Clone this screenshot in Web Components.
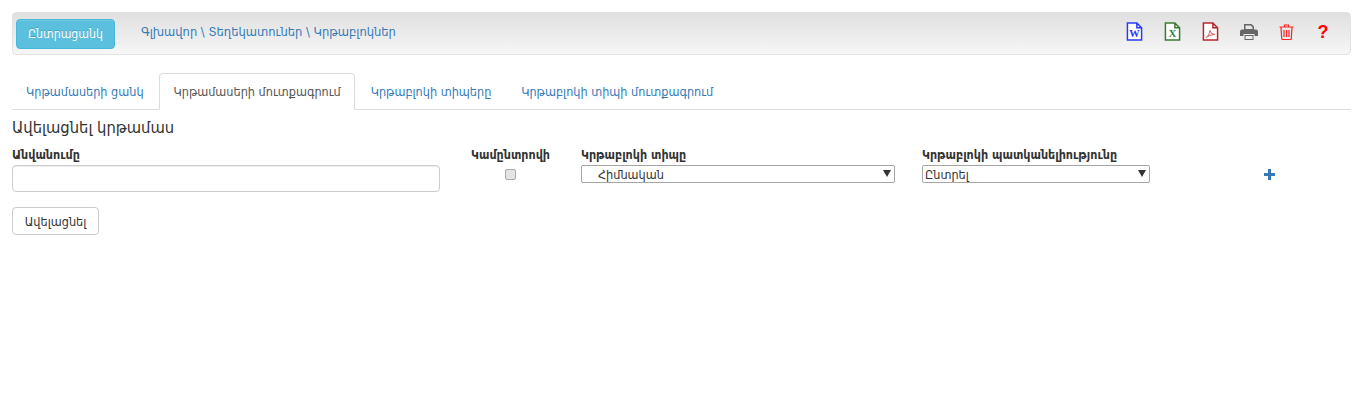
<!DOCTYPE html>
<html lang="hy">
<head>
<meta charset="utf-8">
<title>Կրթաբլոկներ</title>
<style>
  html, body { margin: 0; background: #fff; }
  body {
    font-family: "DejaVu Sans Condensed", "DejaVu Sans", sans-serif;
    font-size: 12.55px;
    color: #333;
  }
</style>
</head>
<body>
<x-page>
  <x-topbar slot="top" menu="Ընտրացանկ">
    <x-crumbs>
      <a>Գլխավոր</a> \ <a>Տեղեկատուներ</a> \ <a>Կրթաբլոկներ</a>
    </x-crumbs>
    <x-toolbar slot="tools"></x-toolbar>
  </x-topbar>
  <x-tabs>
    <x-tab>Կրթամասերի ցանկ</x-tab>
    <x-tab active>Կրթամասերի մուտքագրում</x-tab>
    <x-tab>Կրթաբլոկի տիպերը</x-tab>
    <x-tab>Կրթաբլոկի տիպի մուտքագրում</x-tab>
  </x-tabs>
  <x-block-form></x-block-form>
</x-page>

<script>
const ICONS = {
  word: `<svg width="17" height="19" viewBox="0 0 18 20"><path d="M1.500 1h10l5 5v13h-15z M11.500 1v5h5" fill="#fff" stroke="#2a3bff" stroke-width="1.600"/><text x="9" y="16" text-anchor="middle" font-family="Liberation Serif" font-weight="700" font-size="11" fill="#2a3bff">W</text></svg>`,
  excel: `<svg width="17" height="19" viewBox="0 0 18 20"><path d="M1.500 1h10l5 5v13h-15z M11.500 1v5h5" fill="#fff" stroke="#3d7a33" stroke-width="1.600"/><text x="9" y="16" text-anchor="middle" font-family="Liberation Serif" font-weight="700" font-size="11" fill="#2e7d32">X</text></svg>`,
  pdf: `<svg width="17" height="19" viewBox="0 0 18 20"><path d="M1.500 1h10l5 5v13h-15z M11.500 1v5h5" fill="#fff" stroke="#b5272d" stroke-width="1.600"/><path d="M4 16.500c2-1 4-4.500 4.500-8 .5 3 2.500 4.500 5.500 4.500-3 0-6.500 1-10 3.500z" fill="none" stroke="#d9777b" stroke-width="1.200"/></svg>`,
  print: `<svg width="18" height="16" viewBox="0 0 18 16"><path d="M4 0h7.500L14 2.500V6H4z M5.500 1.500V5h7V3.200l-1.800-1.700z" fill="#666" fill-rule="evenodd"/><path d="M2 5.500h14a2 2 0 0 1 2 2V12h-3.500v-2h-11v2H0V7.500a2 2 0 0 1 2-2z" fill="#666"/><path d="M4.500 11h9v5h-9z M5.500 12v3h7v-3z" fill="#666" fill-rule="evenodd"/></svg>`,
  trash: `<svg width="15" height="16" viewBox="0 0 15 16"><path d="M5.500 2.500V1h4v1.500 M.5 3h14 M2 3l.7 11.500a1 1 0 0 0 1 1h7.600a1 1 0 0 0 1-1L13 3" fill="none" stroke="#f22" stroke-width="1.200"/><path d="M5 6v7M7.500 6v7M10 6v7" stroke="#f22" stroke-width="1.200"/></svg>`,
  help: `<span style="font:700 18px/1 'Liberation Sans',sans-serif;color:#f00">?</span>`,
}

// Small helper so each element only has to give its markup.
function defineEl(name, html) {
  customElements.define(name, class extends HTMLElement {
    constructor() {
      super()
      this.attachShadow({ mode: "open" }).innerHTML = html
    }
  })
}

defineEl("x-page", `
  <style>
    :host { display: block; padding: 12px 8px 0 12px; }
  </style>
  <slot name="top"></slot>
  <slot></slot>
`)

customElements.define("x-topbar", class extends HTMLElement {
  constructor() {
    super()
    this.attachShadow({ mode: "open" }).innerHTML = `
      <style>
        :host {
          display: flex;
          align-items: center;
          height: 43px;
          box-sizing: border-box;
          padding: 0 17px 0 3px;
          border: 1px solid #e2e2e2;
          border-radius: 4px;
          background: linear-gradient(#e0e0e0, #f6f6f6);
        }
        button {
          width: 99px;
          height: 30px;
          padding: 0;
          font: inherit;
          font-size: 12.2px;
          color: #fff;
          background: #5bc0de;
          border: 1px solid #46b8da;
          border-radius: 4px;
          text-shadow: 0 -1px 0 rgba(0, 0, 0, .2);
          box-shadow: inset 0 1px 0 rgba(255, 255, 255, .15);
        }
        .crumbs { flex: 1; margin: -4px 0 0 26px; }
      </style>
      <button></button>
      <div class="crumbs"><slot></slot></div>
      <slot name="tools"></slot>
    `
    this.shadowRoot.querySelector("button").textContent = this.getAttribute("menu")
  }
})

defineEl("x-crumbs", `
  <style>
    :host { display: block; color: #337ab7; font-size: 12.8px; }
    ::slotted(a) { color: #337ab7; }
  </style>
  <slot></slot>
`)

defineEl("x-toolbar", `
  <style>
    :host { display: flex; align-items: center; gap: 19px; margin-top: -4px; }
    span { display: flex; justify-content: center; width: 19px; }
    span:last-child { margin-left: -1px; }
  </style>
  <span>${ICONS.word}</span><span>${ICONS.excel}</span><span>${ICONS.pdf}</span>
  <span>${ICONS.print}</span><span>${ICONS.trash}</span><span>${ICONS.help}</span>
`)

defineEl("x-tabs", `
  <style>
    :host {
      display: flex;
      margin-top: 18px;
      height: 36px;
      border-bottom: 1px solid #ddd;
    }
  </style>
  <slot></slot>
`)

defineEl("x-tab", `
  <style>
    :host {
      display: block;
      height: 36px;
      box-sizing: border-box;
      padding: 9px 13px 0;
      line-height: 18px;
      margin-right: 1.9px;
      color: #337ab7;
      border: 1px solid transparent;
      border-radius: 4px 4px 0 0;
    }
    :host([active]) {
      height: 37px;
      color: #555;
      background: #fff;
      border-color: #ddd #ddd #fff;
    }
  </style>
  <slot></slot>
`)

customElements.define("x-select", class extends HTMLElement {
  constructor() {
    super()
    this.attachShadow({ mode: "open" }).innerHTML = `
      <style>
        :host { display: block; position: relative; height: 18px; }
        select {
          appearance: none;
          display: block;
          width: 100%;
          height: 18px;
          box-sizing: border-box;
          margin: 0;
          padding: 1px 16px 0 2px;
          font: inherit;
          line-height: 16px;
          color: #333;
          background: #fff;
          border: 1px solid #a6a6a6;
          border-radius: 2px;
        }
        i {
          position: absolute;
          right: 4px;
          top: 5px;
          border: 4px solid transparent;
          border-top: 7px solid #333;
          border-bottom: 0;
        }
      </style>
      <select><option></option></select><i></i>
    `
    this.shadowRoot.querySelector("option").textContent = this.getAttribute("value")
    this.shadowRoot.querySelector("select").style.paddingLeft = (this.getAttribute("indent") || 2) + "px"
  }
})

defineEl("x-block-form", `
  <style>
    :host { display: block; }
    h3 {
      margin: 8px 0 10px;
      font-size: 16.4px;
      line-height: 20px;
      font-weight: 400;
      color: #333;
    }
    .row {
      display: grid;
      grid-template-columns: 428px 141px 314px 255px 1fr;
      align-items: start;
    }
    .field:nth-child(4) { margin-left: 27px; }
    label {
      display: block;
      height: 17px;
      font-size: 12.4px;
      line-height: 14px;
      font-weight: 700;
    }
    .c { text-align: center; }
    input[type=text] {
      display: block;
      width: 100%;
      height: 27px;
      box-sizing: border-box;
      border: 1px solid #ccc;
      border-radius: 4px;
      box-shadow: inset 0 1px 1px rgba(0, 0, 0, .075);
    }
    input[type=checkbox] {
      appearance: none;
      display: block;
      width: 11px;
      height: 11px;
      box-sizing: border-box;
      margin: 4px auto 0;
      background: #e4e4e4;
      border: 1px solid #aaa;
      border-radius: 2px;
    }
    .plus { margin: 21px 0 0 114px; line-height: 0; }
    button {
      margin-top: 15px;
      width: 87px;
      height: 28px;
      padding: 0;
      font: inherit;
      color: #333;
      background: #fff;
      border: 1px solid #ccc;
      border-radius: 4px;
    }
  </style>
  <h3>Ավելացնել կրթամաս</h3>
  <div class="row">
    <div class="field"><label>Անվանումը</label><input type="text"></div>
    <div class="field"><label class="c">Կամընտրովի</label><input type="checkbox" disabled></div>
    <div class="field"><label>Կրթաբլոկի տիպը</label><x-select value="Հիմնական" indent="16"></x-select></div>
    <div class="field"><label>Կրթաբլոկի պատկանելիությունը</label><x-select value="Ընտրել"></x-select></div>
    <div class="plus"><svg width="11" height="11" viewBox="0 0 11 11"><path d="M4 0h3v4h4v3H7v4H4V7H0V4h4z" fill="#337ab7"/></svg></div>
  </div>
  <button>Ավելացնել</button>
`)
</script>
</body>
</html>
